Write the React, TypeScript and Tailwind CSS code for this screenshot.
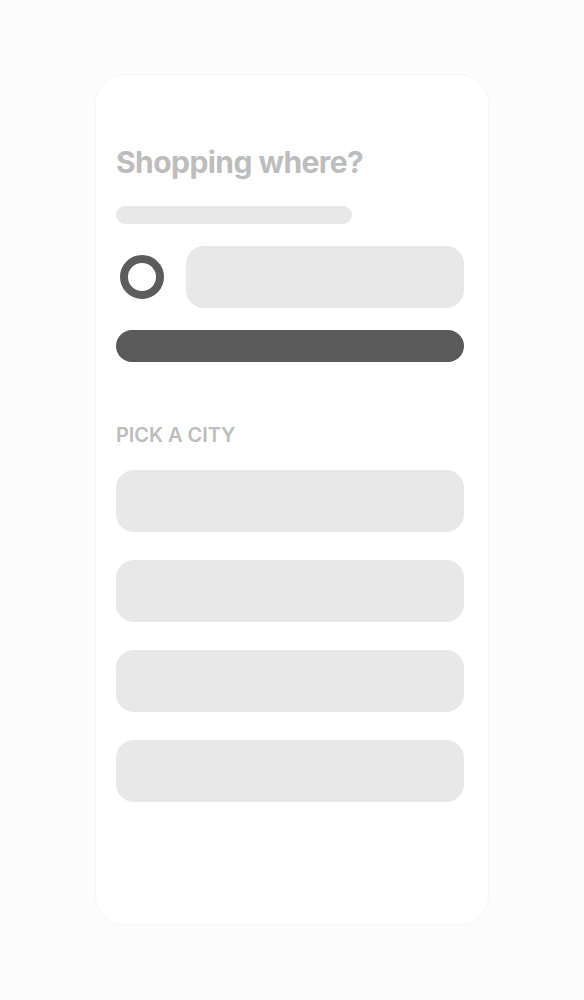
export default function App() {
  const cities = [0, 1, 2, 3];
  return (
    <div className="min-h-[1000px] w-full bg-[#fcfcfc] pt-[75px]" style={{ fontFamily: 'Inter, "Noto Sans", sans-serif' }}>
      <div className="ml-[96px] w-[392px] h-[849px] rounded-[28px] bg-white shadow-[0_0_0_1px_#f6f6f6] pl-[20px] pr-[24px] pt-[68px]">
        <h1 className="text-[30px] leading-[38px] font-bold text-[#bdbdbd] tracking-[-0.55px]">Shopping where?</h1>
        <div className="mt-[25px] h-[18px] w-[236px] rounded-full bg-[#e8e8e8]" />
        <div className="mt-[22px] flex items-center gap-[22px]">
          <div className="ml-[4px] h-[44px] w-[44px] rounded-full border-[8px] border-[#5c5c5c]" />
          <div className="h-[62px] flex-1 rounded-[18px] bg-[#e8e8e8]" />
        </div>
        <div className="mt-[22px] h-[32px] rounded-full bg-[#5a5a5a]" />
        <div className="mt-[61px] text-[20px] leading-[24px] font-semibold text-[#bdbdbd] tracking-[-0.05px]">PICK A CITY</div>
        <div className="mt-[23px] flex flex-col gap-[28px]">
          {cities.map((c) => (
            <div key={c} className="h-[62px] rounded-[18px] bg-[#e8e8e8]" />
          ))}
        </div>
      </div>
    </div>
  );
}
